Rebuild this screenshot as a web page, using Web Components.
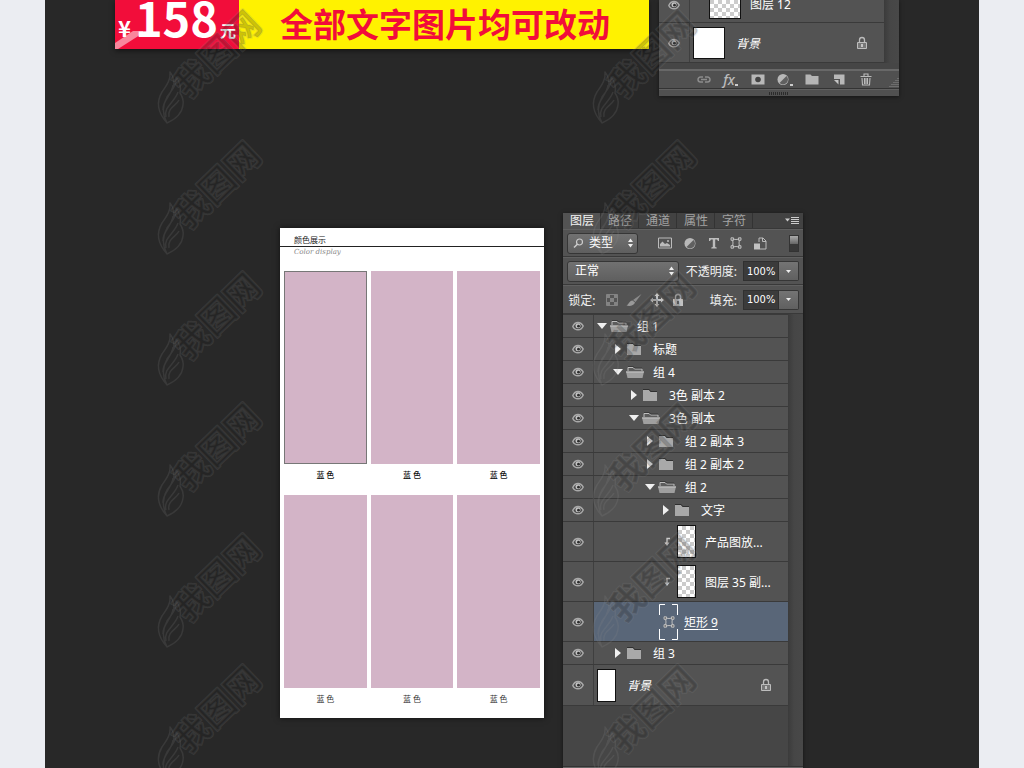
<!DOCTYPE html>
<html lang="zh-CN">
<head>
<meta charset="utf-8">
<title>颜色展示</title>
<style>
  html { background: #ebedf2; }
  body { margin: 0; font-family: "Noto Sans", "Noto Sans CJK SC", sans-serif; font-size: 12px; }
</style>
</head>
<body>
<preview-stage>
  <promo-banner slot="top" price="158">全部文字图片均可改动</promo-banner>
  <layer-panel slot="top" footer>
    <layer-row kind="thumb" depth="1" size="cut">图层 12</layer-row>
    <layer-row kind="base" size="wide" locked>背景</layer-row>
  </layer-panel>
  <color-card slot="main"></color-card>
  <layer-panel slot="main" controls>
    <layer-row kind="open">组 1</layer-row>
    <layer-row kind="closed" depth="1">标题</layer-row>
    <layer-row kind="open" depth="1">组 4</layer-row>
    <layer-row kind="closed" depth="2">3色 副本 2</layer-row>
    <layer-row kind="open" depth="2">3色 副本</layer-row>
    <layer-row kind="closed" depth="3">组 2 副本 3</layer-row>
    <layer-row kind="closed" depth="3">组 2 副本 2</layer-row>
    <layer-row kind="open" depth="3">组 2</layer-row>
    <layer-row kind="closed" depth="4">文字</layer-row>
    <layer-row kind="clip" depth="4">产品图放...</layer-row>
    <layer-row kind="clip" depth="4">图层 35 副...</layer-row>
    <layer-row kind="shape" depth="4" selected>矩形 9</layer-row>
    <layer-row kind="closed" depth="1">组 3</layer-row>
    <layer-row kind="base" locked>背景</layer-row>
  </layer-panel>
</preview-stage>

<script>
const define = (name, html, init) => customElements.define(name, class extends HTMLElement {
  constructor() {
    super();
    const t = document.createElement('template');
    t.innerHTML = html;
    this.attachShadow({ mode: 'open' }).append(t.content.cloneNode(true));
  }
  connectedCallback() { if (init) init(this, this.shadowRoot); }
});

/* Icon set: [width, height, markup] */
const ICONS = {
  eye: [12, 10, '<path d="M.8 5.500C2 2.800 4 1.500 6 1.500s4 1.300 5.200 3.500C10 7.700 8 8.800 6 8.800S2 8 .8 5.500z" fill="#4a4a4a" stroke="#a9a9a9" stroke-width="1.500"/><circle cx="6" cy="4.800" r="2.500" fill="#c4c4c4"/><circle cx="6.500" cy="5.200" r="1.400" fill="#2c2c2c"/>'],
  down: [10, 8, '<path d="M0 1h10L5 7z" fill="#f0f0f0"/>'],
  right: [10, 10, '<path d="M2 0v10L8 5z" fill="#f0f0f0"/>'],
  closed: [18, 14, '<path d="M1 2h6l1.500 2H15v9H1z" fill="#a9a9a9"/><path d="M1 1.500h6.200l1.500 2H15" fill="none" stroke="#303030"/>'],
  open: [18, 14, '<path d="M2 6V2.500h5L8.500 4H16v2" fill="#5c5c5c" stroke="#bdbdbd"/><path d="M0 6.500h18L16.500 13h-15z" fill="#9f9f9f"/><path d="M0 7h18" stroke="#c8c8c8"/><path d="M2 1.500h5.300L8.800 3H16" fill="none" stroke="#333" stroke-width=".8"/>'],
  clip: [8, 10, '<path d="M7 1.500H4V6" fill="none" stroke="#ccc" stroke-width="1.300"/><path d="M1.500 5.500h5L4 9z" fill="#ddd"/>'],
  lock: [12, 14, '<path d="M3.500 6V4a2.500 2.500 0 0 1 5 0v2" fill="none" stroke="#bbb" stroke-width="1.300"/><path d="M1.500 6.500h9v6h-9z" fill="#777" stroke="#bdbdbd"/><path d="M6 8v3" stroke="#ddd" stroke-width="1.500"/>'],
  lockfill: [12, 14, '<path d="M3.500 6V4a2.500 2.500 0 0 1 5 0v2" fill="none" stroke="#bbb" stroke-width="1.500"/><path d="M1 6h10v7H1z" fill="#c2c2c2"/><path d="M6 8v3" stroke="#444" stroke-width="1.500"/>'],
  shape: [12, 12, '<path d="M2.500 2q3.500 1 7 0-1 4 0 8-3.500-1-7 0 1-4 0-8z" fill="none" stroke="#bfbfbf"/><path d="M1 .8h2.500v2.500H1zM8.500.8H11v2.500H8.500zM1 8.700h2.500v2.500H1zM8.500 8.700H11v2.500H8.500z" fill="#6b6b6b" stroke="#c4c4c4" stroke-width=".9"/>'],
  image: [14, 12, '<path d="M.5 1h13v10H.5z" fill="none" stroke="#bbb"/><path d="M2 9.500V7l2.500-2.500L7 7l2-1 3 2v1.500z" fill="#bbb"/><circle cx="10" cy="4" r="1" fill="#bbb"/>'],
  adjust: [14, 13, '<circle cx="7" cy="6.500" r="5.500" fill="#b8b8b8"/><path d="M3.500 10 10.500 3A4.800 4.800 0 0 1 3.500 10z" fill="#606060"/>'],
  type: [12, 12, '<path d="M1 1h10v3h-1L9 2.500H7.200v7.500l1.500.5v1H3.300v-1l1.500-.5V2.500H3L2 4H1z" fill="#bdbdbd"/>'],
  smart: [14, 13, '<path d="M6 5V1h4l3 3v8H7" fill="none" stroke="#bbb"/><path d="M9.500 1v3.500H13" fill="none" stroke="#bbb"/><path d="M1 6.500h6v6H1z" fill="#c2c2c2"/>'],
  search: [11, 11, '<circle cx="6.500" cy="4" r="3" fill="none" stroke="#ccc" stroke-width="1.200"/><path d="M4.300 6.200 1 9.500" stroke="#ccc" stroke-width="1.500"/>'],
  spin: [7, 10, '<path d="M1 4l2.500-3.500L6 4zM1 6l2.500 3.500L6 6z" fill="#eee"/>'],
  caret: [7, 5, '<path d="M1 1h5L3.500 4z" fill="#eee"/>'],
  menu: [16, 9, '<path d="M1 2.500h5L3.500 5.500z" fill="#ccc"/><path d="M7 1.500h8M7 3.500h8M7 5.500h8M7 7.500h8" stroke="#ccc"/>'],
  checker: [12, 12, '<path d="M.5.5h11v11H.5z" fill="#838383" stroke="#838383"/><path d="M4 1h4v3H4zM1 4h3v4H1zM8 4h3v4H8zM4 8h4v3H4z" fill="#555"/>'],
  brush: [16, 14, '<path d="M15.500 1 9.500 9l-2.500-2z" fill="#8c8c8c"/><path d="M6.500 7.500 9 9.500C8 12.500 4 13.500.5 12.500c2.500-1 2.500-4.500 6-5z" fill="#999"/>'],
  move: [14, 14, '<path d="M7 0l2.500 3H8v3h3V4.500L14 7l-3 2.500V8H8v3h1.500L7 14l-2.500-3H6V8H3v1.500L0 7l3-2.500V6h3V3H4.500z" fill="#c4c4c4"/>'],
  link: [14, 9, '<path d="M6 2H3.500a2.500 2.500 0 0 0 0 5H6M8 2h2.500a2.500 2.500 0 0 1 0 5H8M4 4.500h6" fill="none" stroke="#8c8c8c" stroke-width="1.500"/>'],
  mask: [14, 11, '<path d="M.5.5h13v10H.5z" fill="#b8b8b8"/><circle cx="7" cy="5.500" r="2.800" fill="#444"/>'],
  folder: [14, 11, '<path d="M.5.5h5L7 2h6.500v8.500H.5z" fill="#b5b5b5"/>'],
  page: [12, 11, '<path d="M1 .5h10.500v10H7V5H1z" fill="#b8b8b8"/><path d="M1 6h4.500v4.500z" fill="#c4c4c4"/>'],
  trash: [12, 13, '<path d="M.5 3.500h11M4 3V1h4v2M2 5l.5 7h7L10 5M4.500 5v6M6 5v6M7.500 5v6" fill="none" stroke="#bbb" stroke-width="1.100"/>'],
  corner: [11, 11, '<path d="M10 1v10M8 3v8M6 5v6M4 7v4M2 9v2" stroke="#8a8a8a" stroke-dasharray="1 1"/>']
};

customElements.define('ui-icon', class extends HTMLElement {
  connectedCallback() {
    const [w, h, art] = ICONS[this.getAttribute('name')];
    const root = this.shadowRoot || this.attachShadow({ mode: 'open' });
    root.innerHTML = `<style>:host{display:inline-flex;flex:none}svg{display:block}</style>
      <svg width="${w}" height="${h}" viewBox="0 0 ${w} ${h}" aria-hidden="true">${art}</svg>`;
  }
});

define('preview-stage', `
  <style>
    :host { display: flex; flex-direction: column; position: relative; min-height: 100vh;
      margin: 0 45px; background: #282828; overflow: hidden; }
    .top { display: flex; gap: 10px; align-items: flex-start; padding: 0 80px 0 70px; margin-bottom: 117px; }
    .main { flex: 1; display: flex; gap: 19px; padding: 0 176px 0 235px; }
    .marks { position: absolute; inset: 0; pointer-events: none; overflow: hidden; }
    .marks water-mark { position: absolute; }
  </style>
  <div class="top"><slot name="top"></slot></div>
  <div class="main"><slot name="main"></slot></div>
  <div class="marks"></div>`, (host, root) => {
  const layer = root.querySelector('.marks');
  for (const x of [113, 548]) for (let y = 7; y < 768; y += 131) {
    const m = document.createElement('water-mark');
    m.style.left = x + 'px';
    m.style.top = y + 'px';
    layer.append(m);
  }
});

define('water-mark', `
  <style>
    :host { display: block; }
    svg { display: block; overflow: visible; }
    text { font: 700 35px "Noto Sans CJK SC", sans-serif; text-anchor: middle; }
    text, path { paint-order: stroke; fill: rgba(28,28,28,.24); stroke: rgba(140,140,140,.17); stroke-width: 2; stroke-linejoin: round; }
    path { fill: none; stroke-width: 1.5; }
  </style>
  <svg width="106" height="118" viewBox="0 0 106 118" aria-hidden="true">
    <path d="M9 116C0 106-2 95 4 85c4-6 9-12 8-20 4 5 5 10 3 16M9 116c9-4 15-9 16-18 1-5-1-9-3-12 1-5 0-11-4-16 1 9-5 14-9 20-4 7-6 15 0 26zM5 103c-1-9 9-15 10-25M8 110c-3-10 9-15 12-25M11 110c-2-9 7-11 10-17"/>
    <text x="59" y="60" transform="rotate(-44 59 47)">我图网</text>
  </svg>`);

define('promo-banner', `
  <style>
    :host { flex: 1; min-width: 0; display: flex; height: 49px; background: #fff200;
      color: #f20d3a; font-family: "Noto Sans CJK SC", sans-serif; font-weight: 700; box-shadow: 0 2px 5px rgba(0,0,0,.5); }
    .price { position: relative; flex: none; box-sizing: border-box; width: 124px; background: #f20d3a; color: #fff;
      display: flex; align-items: baseline; justify-content: center; line-height: 34px; }
    .price svg { position: absolute; left: 0; bottom: 0; }
    .cur { font-size: 22px; padding-right: 4px; z-index: 1; }
    .num { font-size: 47px; z-index: 1; }
    .unit { font-size: 16px; padding-left: 2px; }
    .msg { flex: 1; display: flex; align-items: center; justify-content: center; padding-left: 2px;
      font-size: 33px; line-height: 46px; height: 46px; white-space: nowrap; }
  </style>
  <div class="price">
    <svg width="28" height="18" viewBox="0 0 28 18" aria-hidden="true"><path d="M0 12 18 0h10v2L3 18H0z" fill="#fff" opacity=".5"/></svg>
    <span class="cur">¥</span><span class="num"></span><span class="unit">元</span>
  </div>
  <div class="msg"><slot></slot></div>`, (host, root) => {
  root.querySelector('.num').textContent = host.getAttribute('price');
});

define('color-swatch', `
  <style>
    :host { display: block; text-align: center; font-size: 8px; line-height: 12px; color: #333; }
    .tile { height: 193px; margin-bottom: 5px; background: #d3b4c7; box-sizing: border-box; }
    :host([active]) .tile { border: 1px solid #777; }
    .name { display: block; font-family: "Noto Sans CJK SC", sans-serif; }
    :host([strong]) { color: #111; font-weight: 500; }
  </style>
  <div class="tile"></div><span class="name"><slot></slot></span>`);

define('color-card', `
  <style>
    :host { flex: 1; min-width: 0; align-self: flex-start; box-sizing: border-box; margin-top: 15px;
      padding-bottom: 13px; background: #fff; box-shadow: 0 0 6px rgba(0,0,0,.6); }
    h2, p { margin: 0; padding-left: 14px; }
    h2 { padding-top: 6px; font: 400 8px/12px "Noto Sans CJK SC", sans-serif; color: #222; border-bottom: 1px solid #222; }
    p { font: italic 7px/10px "DejaVu Serif", "Liberation Serif", serif; color: #888; }
    .grid { display: grid; grid-template-columns: repeat(3, 1fr); gap: 14px 4px; padding: 14px 4px 0; }
  </style>
  <h2>颜色展示</h2>
  <p>Color display</p>
  <div class="grid">
    <color-swatch active strong>蓝 色</color-swatch><color-swatch strong>蓝 色</color-swatch><color-swatch strong>蓝 色</color-swatch>
    <color-swatch>蓝 色</color-swatch><color-swatch>蓝 色</color-swatch><color-swatch>蓝 色</color-swatch>
  </div>`);

define('panel-tabs', `
  <style>
    :host { display: flex; height: 15px; background: #424242; border-bottom: 1px solid #383838; }
    button { border: 0; border-right: 1px solid #333; margin: 0; padding: 0 6px 0 7px; background: none; color: #a3a3a3;
      font: inherit; line-height: 16px; height: 15px; white-space: nowrap; }
    button[aria-selected=true] { background: #535353; color: #f4f4f4; height: 16px; }
    .menu { margin-left: auto; border: 0; padding: 0 3px; }
  </style>
  <button role="tab" aria-selected="true">图层</button><button role="tab">路径</button><button role="tab">通道</button><button role="tab">属性</button><button role="tab">字符</button>
  <button class="menu" aria-label="面板菜单"><ui-icon name="menu"></ui-icon></button>`);

define('combo-box', `
  <style>
    :host { display: flex; box-sizing: border-box; height: 21px; align-items: center; padding: 0 3px 0 7px;
      border: 1px solid #363636; border-radius: 3px; background: linear-gradient(#717171, #5f5f5f); }
    select { appearance: none; flex: 1; min-width: 0; border: 0; padding: 0; background: none; color: #fff; font: inherit; line-height: 18px; }
    ui-icon[name=search] { margin: 0 5px 0 -2px; }
  </style>
  <ui-icon name="spin"></ui-icon>`, (host, root) => {
  if (root.querySelector('select')) return;
  const s = document.createElement('select');
  s.setAttribute('aria-label', host.getAttribute('label'));
  s.add(new Option(host.getAttribute('value')));
  root.querySelector('ui-icon').before(s);
  if (host.hasAttribute('search')) {
    const i = document.createElement('ui-icon');
    i.setAttribute('name', 'search');
    s.before(i);
  }
});

define('percent-field', `
  <style>
    :host { display: flex; align-items: center; }
    label { white-space: nowrap; padding-right: 6px; }
    input { box-sizing: border-box; width: 36px; height: 20px; margin: 0; padding: 0 0 0 3px; border: 1px solid #303030;
      background: #3b3b3b; color: #fff; font: 11px "DejaVu Sans Condensed", "Noto Sans", sans-serif; }
    button { width: 20px; height: 20px; margin: 0; padding: 0; border: 1px solid #363636; border-left: 0;
      border-radius: 0 2px 2px 0; background: linear-gradient(#747474, #606060); display: flex; align-items: center; justify-content: center; }
  </style>
  <label for="v"></label><input id="v" value="100%"><button aria-label="调整"><ui-icon name="caret"></ui-icon></button>`,
(host, root) => { root.querySelector('label').textContent = host.getAttribute('label'); });

define('panel-controls', `
  <style>
    :host { display: block; color: #f0f0f0; }
    .bar { display: flex; align-items: center; box-sizing: border-box; height: 28px; padding: 0 4px;
      border-bottom: 1px solid #393939; border-top: 1px solid #606060; }
    .bar:last-child { height: 29px; }
    .type { width: 71px; }
    .mode { width: 112px; }
    .tools { display: flex; flex: 1; justify-content: space-between; padding: 0 22px 0 20px; align-items: center; }
    button { border: 0; margin: 0; padding: 0; background: none; display: flex; }
    .switch { width: 10px; height: 17px; border: 1px solid #333; background: #383838; }
    .switch::before { content: ""; width: 8px; height: 8px; background: linear-gradient(#aaa, #666); }
    .right { margin-left: auto; }
    .locks { display: flex; gap: 8px; padding-left: 11px; align-items: center; }
  </style>
  <div class="bar">
    <combo-box class="type" label="筛选" value="类型" search></combo-box>
    <div class="tools">
      <button aria-label="像素图层"><ui-icon name="image"></ui-icon></button>
      <button aria-label="调整图层"><ui-icon name="adjust"></ui-icon></button>
      <button aria-label="文字图层"><ui-icon name="type"></ui-icon></button>
      <button aria-label="形状图层"><ui-icon name="shape"></ui-icon></button>
      <button aria-label="智能对象"><ui-icon name="smart"></ui-icon></button>
    </div>
    <button class="switch" aria-label="筛选开关"></button>
  </div>
  <div class="bar">
    <combo-box class="mode" label="混合模式" value="正常"></combo-box>
    <percent-field class="right" label="不透明度:"></percent-field>
  </div>
  <div class="bar">
    <span>&#x200A;锁定:</span>
    <div class="locks">
      <button aria-label="透明像素"><ui-icon name="checker"></ui-icon></button>
      <button aria-label="图像像素"><ui-icon name="brush"></ui-icon></button>
      <button aria-label="位置"><ui-icon name="move"></ui-icon></button>
      <button aria-label="全部"><ui-icon name="lockfill"></ui-icon></button>
    </div>
    <percent-field class="right" label="填充:"></percent-field>
  </div>`);

define('panel-footer', `
  <style>
    :host { display: block; background: #505050; border-top: 2px solid #686868; }
    .bar { display: flex; align-items: center; height: 17px; padding-left: 31px; border-bottom: 1px solid #333; }
    button { width: 27px; height: 17px; border: 0; margin: 0; padding: 0; background: none; color: #bbb;
      display: flex; align-items: center; justify-content: center; }
    .fx { font: italic 500 14px/16px "Noto Sans", sans-serif; }
    .more::after { content: ""; align-self: flex-end; width: 3px; height: 2px; margin-bottom: 2px; background: #ccc; }
    .bar > ui-icon { margin-left: auto; align-self: flex-end; }
    .grip { height: 7px; display: flex; justify-content: center; align-items: center; border-top: 1px solid #606060; box-sizing: border-box; }
    .grip::before { content: ""; width: 20px; height: 3px; background: repeating-linear-gradient(90deg, #2b2b2b 0 1px, #505050 1px 2px); }
  </style>
  <div class="bar">
    <button aria-label="链接"><ui-icon name="link"></ui-icon></button>
    <button class="fx more">fx</button>
    <button aria-label="蒙版"><ui-icon name="mask"></ui-icon></button>
    <button class="more" aria-label="调整"><ui-icon name="adjust"></ui-icon></button>
    <button aria-label="新建组"><ui-icon name="folder"></ui-icon></button>
    <button aria-label="新建图层"><ui-icon name="page"></ui-icon></button>
    <button aria-label="删除"><ui-icon name="trash"></ui-icon></button>
    <ui-icon name="corner"></ui-icon>
  </div>
  <div class="grip"></div>`);

define('layer-panel', `
  <style>
    :host { flex: none; width: 240px; display: flex; flex-direction: column; background: #535353;
      box-shadow: 0 1px 4px rgba(0,0,0,.5); }
    .body { flex: 1; display: flex; background: #464646; }
    .list { flex: 1; min-width: 0; }
    .gutter { width: 15px; background: linear-gradient(90deg, #3b3b3b, #464646 6px, #484848); }
    .body { padding-bottom: 6px; }
    .foot { height: 1px; background: #666; border-top: 1px solid #333; }
    :host([controls]) .body { padding-bottom: 0; }
    :host([controls]) .list { border-top: 1px solid #3a3a3a; }
  </style>
  <div class="head"></div>
  <div class="body"><div class="list"><slot></slot></div><div class="gutter"></div></div>
  <div class="tail"></div>`, (host, root) => {
  if (host.hasAttribute('controls')) {
    root.querySelector('.head').innerHTML = '<panel-tabs></panel-tabs><panel-controls></panel-controls>';
    root.querySelector('.tail').className = 'foot';
  }
  if (host.hasAttribute('footer')) root.querySelector('.tail').innerHTML = '<panel-footer></panel-footer>';
});

define('layer-row', `
  <style>
    :host { display: flex; height: 22px; border-bottom: 1px solid #3a3a3a; background: #535353; color: #fff; }
    :host([kind=clip]), :host([kind=shape]), :host([size=wide]) { height: 39px; }
    :host([kind=base]:not([size])) { height: 40px; }
    :host([size=cut]) { height: 22px; align-items: flex-end; }
    button { border: 0; margin: 0; padding: 0; background: none; display: flex; align-items: center; justify-content: center; }
    .eye { flex: none; width: 31px; border-right: 1px solid #3f3f3f; align-self: stretch; }
    .cell { flex: 1; min-width: 0; display: flex; align-items: center; padding-left: calc(3px + var(--depth, 0) * 16px); padding-right: 16px; }
    :host([selected]) .cell { background: #596678; }
    :host([kind=shape]) .cell { padding-left: calc(1px + var(--depth) * 16px); }
    .name { white-space: nowrap; line-height: 18px; padding-top: 2px; padding-left: 9px; }
    .lock { margin-left: auto; }
    .arrow { width: 10px; margin-right: 3px; }
    .clip { width: 12px; margin-right: 4px; flex: none; display: flex; justify-content: center; }
    .thumb { flex: none; box-sizing: border-box; width: 19px; height: 33px; border: 1px solid #111; background: #fff; }
    .alpha { background: repeating-conic-gradient(#ccc 0 25%, #fff 0 50%) 0 0 / 8px 8px; }
    :host([size]) .thumb { width: 32px; height: 32px; }
    :host([size=cut]) .thumb { margin-bottom: 3px; }
    :host([size=cut]) .cell { align-items: flex-end; }
    :host([size=cut]) .name { padding: 0 0 9px 9px; line-height: 16px; }
    :host([size=cut]) .eye { align-items: flex-start; }
    :host([kind=base]) .name { font-style: italic; padding-left: 11px; }
    .frame { flex: none; position: relative; display: flex; align-items: center; justify-content: center; width: 19px; height: 36px; }
    .frame > svg { position: absolute; inset: 0; }
    :host([kind=shape]) .name { padding-left: 6px; text-decoration: underline; text-underline-offset: 2px; }
  </style>
  <button class="eye" aria-label="可见性"><ui-icon name="eye"></ui-icon></button>
  <div class="cell"><span class="name"><slot></slot></span></div>`, (host, root) => {
  const kind = host.getAttribute('kind');
  const cell = root.querySelector('.cell');
  host.style.setProperty('--depth', host.getAttribute('depth') || 0);
  const lead = {
    open: '<button class="arrow" aria-label="折叠"><ui-icon name="down"></ui-icon></button><ui-icon name="open"></ui-icon>',
    closed: '<button class="arrow" aria-label="展开"><ui-icon name="right"></ui-icon></button><ui-icon name="closed"></ui-icon>',
    clip: '<span class="clip"><ui-icon name="clip"></ui-icon></span><span class="thumb alpha"></span>',
    thumb: '<span class="thumb alpha"></span>',
    base: '<span class="thumb"></span>',
    shape: '<span class="frame"><svg width="19" height="36" viewBox="0 0 19 36" aria-hidden="true"><path d="M.5 11V.5H6M13 .5h5.500V11M18.500 25v10.500H13M6 35.500H.5V25" fill="none" stroke="#fff"/></svg><ui-icon name="shape"></ui-icon></span>'
  }[kind];
  cell.insertAdjacentHTML('afterbegin', lead);
  if (host.hasAttribute('locked')) cell.insertAdjacentHTML('beforeend', '<ui-icon class="lock" name="lock"></ui-icon>');
});
</script>
</body>
</html>
